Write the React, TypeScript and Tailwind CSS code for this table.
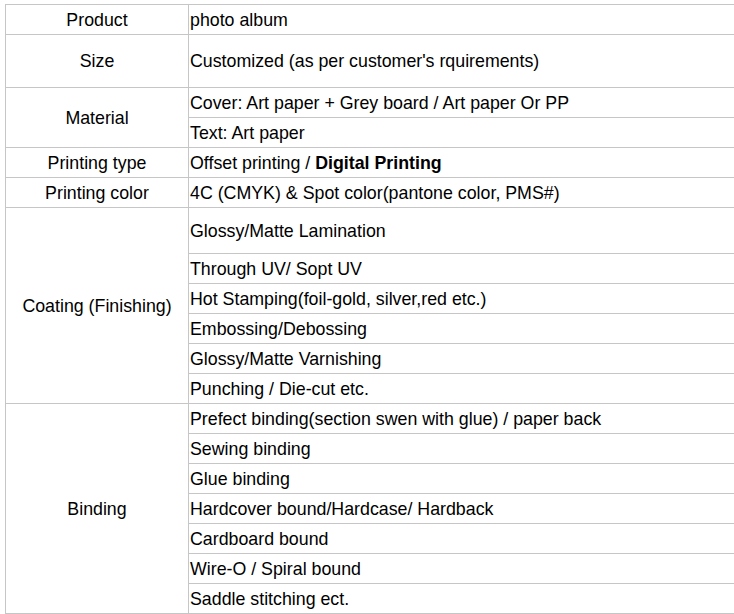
import React from "react";

type Row = { label?: string; span?: number; h: number; content: React.ReactNode };

const rows: Row[] = [
  { label: "Product", span: 1, h: 30, content: "photo album" },
  { label: "Size", span: 1, h: 53, content: "Customized (as per customer's rquirements)" },
  { label: "Material", span: 2, h: 30, content: "Cover: Art paper + Grey board / Art paper Or PP" },
  { h: 30, content: "Text: Art paper" },
  {
    label: "Printing type",
    span: 1,
    h: 30,
    content: (
      <>
        Offset printing / <b className="font-bold">Digital Printing</b>
      </>
    ),
  },
  { label: "Printing color", span: 1, h: 30, content: "4C (CMYK) & Spot color(pantone color, PMS#)" },
  { label: "Coating (Finishing)", span: 6, h: 46, content: "Glossy/Matte Lamination" },
  { h: 30, content: "Through UV/ Sopt UV" },
  { h: 30, content: "Hot Stamping(foil-gold, silver,red etc.)" },
  { h: 30, content: "Embossing/Debossing" },
  { h: 30, content: "Glossy/Matte Varnishing" },
  { h: 30, content: "Punching / Die-cut etc." },
  { label: "Binding", span: 7, h: 30, content: "Prefect binding(section swen with glue) / paper back" },
  { h: 30, content: "Sewing binding" },
  { h: 30, content: "Glue binding" },
  { h: 30, content: "Hardcover bound/Hardcase/ Hardback" },
  { h: 30, content: "Cardboard bound" },
  { h: 30, content: "Wire-O / Spiral bound" },
  { h: 30, content: "Saddle stitching ect." },
];

export default function App() {
  return (
    <div
      className="w-[734px] h-[614px] overflow-hidden bg-white pl-[5px] pt-[4px]"
      style={{ fontFamily: '"Liberation Sans", Arial, sans-serif' }}
    >
      <table className="border-collapse w-[760px] text-[17.8px] text-black leading-none">
        <colgroup>
          <col className="w-[183px]" />
          <col />
        </colgroup>
        <tbody>
          {rows.map((r, i) => (
            <tr key={i}>
              {r.label !== undefined && (
                <td
                  rowSpan={r.span}
                  className="border border-[#c6c6c6] text-center align-middle p-0 pt-[2px]"
                >
                  {r.label}
                </td>
              )}
              <td
                className="border border-[#c6c6c6] align-middle p-0 pt-[2px] pl-[1px]"
                style={{ height: r.h }}
              >
                {r.content}
              </td>
            </tr>
          ))}
        </tbody>
      </table>
    </div>
  );
}
